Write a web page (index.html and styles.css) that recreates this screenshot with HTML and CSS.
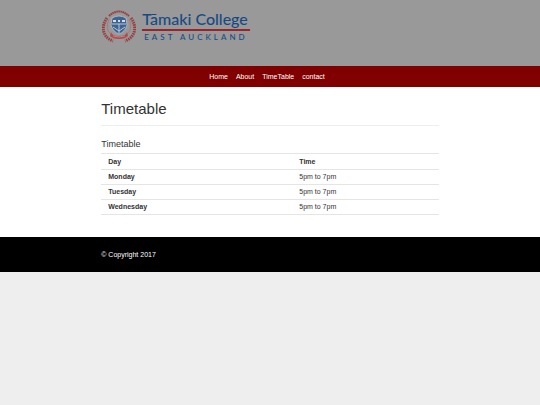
FILE: index.html
```html
<!DOCTYPE html>
<html lang="en">
<head>
<meta charset="utf-8">
<title>Timetable</title>
<link rel="stylesheet" href="styles.css">
</head>
<body>
<header class="banner">
  <div class="container">
    <a class="brand" href="#">
      <svg class="crest" viewBox="0 0 34 34" aria-hidden="true">
        <g fill="none" stroke="#963e42">
          <path d="M7 6 Q17 -3 27 6" stroke-width="2" stroke-dasharray="1.6 .5"/>
          <path d="M5 8 C-1 16 0 27 11 31" stroke-width="3" stroke-dasharray="1.5 .8"/>
          <path d="M29 8 C35 16 34 27 23 31" stroke-width="3" stroke-dasharray="1.5 .8"/>
          <path d="M7 9 C4 16 5 22 11 26 M27 9 C30 16 29 22 23 26" stroke="#a9777a" stroke-width="1"/>
        </g>
        <path d="M10 8 Q17 4 24 8 L25 15 Q23 22 17 24 Q11 22 9 15Z" fill="#3f638f" stroke="#b9c3d0" stroke-width=".8"/>
        <path d="M10 14 H24 M11 17 L17 21 L23 17 M17 14 V23" fill="none" stroke="#b9c8db" stroke-width="1"/>
        <path d="M11 10 H14 V12 H11Z M16 10 H18 V12 H16Z M20 10 H23 V12 H20Z" fill="#d4dbe4"/>
        <path d="M9 22 Q10 26 17 26 Q24 26 25 22 L26 26 Q23 29 17 29 Q11 29 8 26Z" fill="#b4494b"/>
        <path d="M11 26 Q17 28 23 26" fill="none" stroke="#c9a0a2" stroke-width=".7"/>
      </svg>
      <span class="wordmark">
        <span class="school">Tāmaki College</span>
        <span class="place">EAST AUCKLAND</span>
      </span>
    </a>
  </div>
</header>
<nav class="menu">
  <a href="#">Home</a>
  <a href="#">About</a>
  <a href="#">TimeTable</a>
  <a href="#">contact</a>
</nav>
<main class="content">
  <div class="container">
    <h1>Timetable</h1>
    <h2>Timetable</h2>
    <table>
      <thead><tr><th scope="col">Day</th><th scope="col">Time</th></tr></thead>
      <tbody>
        <tr><th scope="row">Monday</th><td>5pm to 7pm</td></tr>
        <tr><th scope="row">Tuesday</th><td>5pm to 7pm</td></tr>
        <tr><th scope="row">Wednesday</th><td>5pm to 7pm</td></tr>
      </tbody>
    </table>
  </div>
</main>
<footer class="footer">
  <div class="container">© Copyright 2017</div>
</footer>
</body>
</html>
```
FILE: styles.css
```css
* { box-sizing: border-box; }
body {
  margin: 0;
  background: #eee;
  color: #333;
  font: 7px/10px "Liberation Sans", Arial, sans-serif;
}
.container { width: 62.5%; margin: 0 auto; }
.banner { background: #999; padding: 9px 0 22px; }
.brand { display: flex; gap: 6px; color: #174a84; text-decoration: none; }
.crest { width: 35px; height: 35px; padding: 1px 0 0 1px; }
.wordmark { display: flex; flex-direction: column; font-family: Lato, "Open Sans", sans-serif; }
.school {
  font-size: 16px;
  font-weight: 500;
  line-height: 20px;
  border-bottom: 2px solid #98252b;
}
.place {
  padding: 0 2px;
  font-size: 8px;
  font-weight: 500;
  line-height: 13px;
  letter-spacing: 3px;
  white-space: nowrap;
}
.menu {
  display: flex;
  justify-content: center;
  gap: 8px;
  padding: 6px 6px 5px 0;
  background: #800000;
}
.menu a { color: #fff; text-decoration: none; }
.content { background: #fff; padding: 12px 0 22px; }
h1 {
  margin: 0 0 12px;
  padding-bottom: 6px;
  border-bottom: 1px solid #eee;
  font-size: 15px;
  font-weight: 400;
  line-height: 20px;
}
h2 { margin: 0 0 3px; font-size: 9px; font-weight: 400; line-height: 12px; }
table { width: 100%; border-collapse: collapse; border-bottom: 1px solid #e5e5e5; }
th, td {
  padding: 2px 7px;
  border-top: 1px solid #e5e5e5;
  text-align: left;
}
thead th { padding: 3px 7px 2px; }
th:first-child { width: 191px; }
.footer { background: #000; color: #fff; padding: 13px 0 12px; }
```
